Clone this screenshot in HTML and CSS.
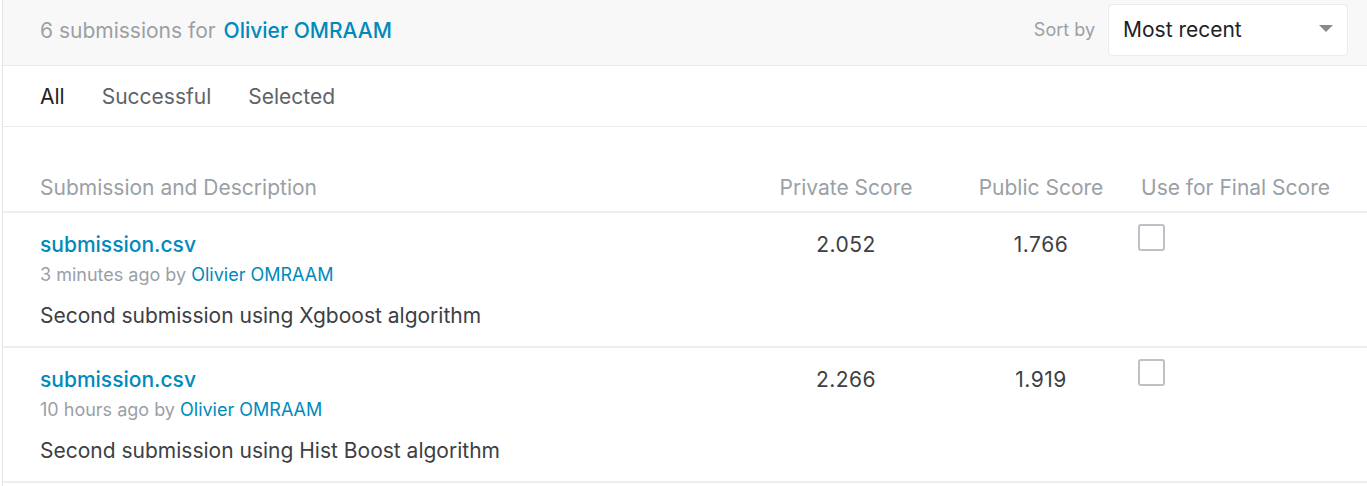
FILE: index.html
```html
<!DOCTYPE html>
<html>
<head>
<meta charset="utf-8">
<link rel="stylesheet" href="styles.css">
</head>
<body>
<div class="panel">
  <div class="topbar">
    <div class="title"><span class="muted">6 submissions for</span> <a class="link" href="#">Olivier OMRAAM</a></div>
    <div class="sort">
      <span class="sort-label">Sort by</span>
      <div class="select">
        <span>Most recent</span>
        <span class="caret"></span>
      </div>
    </div>
  </div>
  <div class="tabs">
    <span class="tab active">All</span>
    <span class="tab">Successful</span>
    <span class="tab">Selected</span>
  </div>
  <div class="table">
    <div class="row head">
      <div class="c-desc">Submission and Description</div>
      <div class="c-num">Private Score</div>
      <div class="c-num">Public Score</div>
      <div class="c-final">Use for Final Score</div>
    </div>
    <div class="row item">
      <div class="c-desc">
        <a class="file" href="#">submission.csv</a>
        <div class="meta">3 minutes ago by <a class="link" href="#">Olivier OMRAAM</a></div>
        <div class="desc">Second submission using Xgboost algorithm</div>
      </div>
      <div class="c-num score">2.052</div>
      <div class="c-num score">1.766</div>
      <div class="c-final"><span class="check"></span></div>
    </div>
    <div class="row item">
      <div class="c-desc">
        <a class="file" href="#">submission.csv</a>
        <div class="meta">10 hours ago by <a class="link" href="#">Olivier OMRAAM</a></div>
        <div class="desc">Second submission using Hist Boost algorithm</div>
      </div>
      <div class="c-num score">2.266</div>
      <div class="c-num score">1.919</div>
      <div class="c-final"><span class="check"></span></div>
    </div>
  </div>
</div>
</body>
</html>
```
FILE: styles.css
```css
* { box-sizing: border-box; }
html, body { margin: 0; padding: 0; background: #fff; }
body {
  font-family: Inter, "Noto Sans", sans-serif;
  color: #3c4043;
  padding-left: 2px;
}
a { text-decoration: none; }
.panel {
  border-left: 1px solid #e4e4e4;
  min-height: 486px;
}
.topbar {
  height: 66px;
  background: #f8f8f8;
  border-bottom: 1px solid #ebebeb;
  display: flex;
  align-items: center;
  justify-content: space-between;
  padding: 0 19px 0 37px;
}
.title { font-size: 21px; margin-top: -5px; }
.muted { color: #9aa0a6; }
.link { color: #008abc; }
.title .link { font-weight: 500; margin-left: 2px; }
.sort { display: flex; align-items: center; gap: 13px; margin-top: -6px; }
.sort-label { color: #9aa0a6; font-size: 18px; }
.select {
  width: 240px;
  height: 52px;
  background: #fff;
  border: 1px solid #ebebeb;
  border-radius: 4px;
  display: flex;
  align-items: center;
  justify-content: space-between;
  padding: 0 14px 0 14px;
  font-size: 21px;
  color: #202124;
}
.caret {
  width: 0; height: 0;
  border-left: 7px solid transparent;
  border-right: 7px solid transparent;
  border-top: 7px solid #8a8a8a;
  margin-top: -2px;
}
.tabs {
  height: 61px;
  border-bottom: 1px solid #ebebeb;
  display: flex;
  align-items: center;
  gap: 37px;
  padding-left: 37px;
  font-size: 21px;
}
.tab { color: #5f6368; }
.tab.active { color: #202124; }
.table { padding-top: 36px; }
.row {
  display: grid;
  grid-template-columns: 1fr 190px 200px 226px;
  padding-left: 37px;
  border-bottom: 2px solid #eeeeee;
}
.head { height: 50px; align-items: center; color: #9aa0a6; font-size: 21px; }
.c-num { text-align: center; }
.item { height: 135px; padding-top: 18px; }
.file { color: #008abc; font-size: 21px; font-weight: 500; display: block; line-height: 28px; }
.meta { color: #9aa0a6; font-size: 18px; line-height: 22px; margin-top: 5px; }
.desc { font-size: 21px; margin-top: 17px; line-height: 26px; color: #3c4043; }
.score { font-size: 21px; line-height: 28px; color: #3c4043; letter-spacing: 0.5px; }
.check {
  display: block;
  width: 27px;
  height: 27px;
  border: 2.5px solid #bdc1c6;
  border-radius: 3px;
  margin-left: -3px;
  margin-top: -7px;
}
```
